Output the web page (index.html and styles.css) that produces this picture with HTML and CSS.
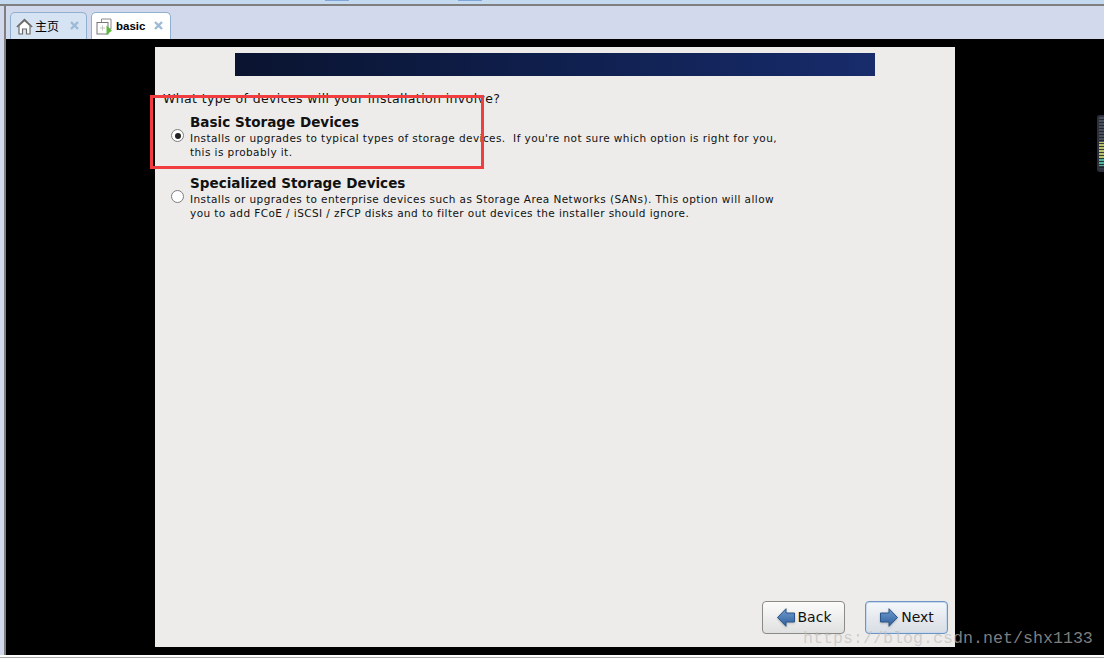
FILE: index.html
```html
<!DOCTYPE html>
<html lang="en">
<head>
<meta charset="utf-8">
<title>basic</title>
<link rel="stylesheet" href="styles.css">
</head>
<body>
<div class="top-strip"><span class="mark mark-a"></span><span class="mark mark-b"></span></div>
<div class="window">
  <div class="tabbar">
    <div class="tab tab-home">
      <svg class="ico" width="17" height="17" viewBox="0 0 17 17"><path d="M.8 9 8.500 1.500 16.200 9" fill="none" stroke="#6a6a6a" stroke-width="1.300"/><path d="M3 7.500V16h3.500v-5h4v5H14V7.500L8.500 2.500z" fill="#fff" stroke="#6a6a6a" stroke-width="1.200"/></svg>
      <span class="tab-label zh">主页</span>
      <svg class="tab-x" width="9" height="9" viewBox="0 0 9 9"><path d="M1 1l7 7M8 1 1 8" stroke="#9dbad6" stroke-width="2.400"/></svg>
    </div>
    <div class="tab tab-active">
      <svg class="ico" width="17" height="17" viewBox="0 0 17 17"><path d="M5.500 4V1h9.500v10h-2" fill="none" stroke="#8a8a8a"/><rect x="1" y="4.500" width="11" height="11.500" fill="#fff" stroke="#777"/><path d="M4 10h5M6.500 7.500v5" stroke="#c4c4c4"/><path d="M10.500 7.500 16 12.500l-5.500 4.500z" fill="#5cb83c"/></svg>
      <span class="tab-label bold">basic</span>
      <svg class="tab-x" width="9" height="9" viewBox="0 0 9 9"><path d="M1 1l7 7M8 1 1 8" stroke="#9dbad6" stroke-width="2.400"/></svg>
    </div>
  </div>
  <div class="screen">
    <div class="installer">
      <div class="banner"></div>
      <p class="question">What type of devices will your installation involve?</p>
      <div class="option option-first">
        <span class="radio radio-on"></span>
        <div class="option-text">
          <div class="option-title">Basic Storage Devices</div>
          <div class="option-desc">Installs or upgrades to typical types of storage devices.&nbsp; If you're not sure which option is right for you,<br>this is probably it.</div>
        </div>
      </div>
      <div class="option option-second">
        <span class="radio"></span>
        <div class="option-text">
          <div class="option-title">Specialized Storage Devices</div>
          <div class="option-desc">Installs or upgrades to enterprise devices such as Storage Area Networks (SANs). This option will allow<br>you to add FCoE / iSCSI / zFCP disks and to filter out devices the installer should ignore.</div>
        </div>
      </div>
      <div class="actions">
        <button class="btn"><svg class="arrow" width="18" height="19" viewBox="0 0 18 19"><defs><linearGradient id="ag" x1="0" y1="0" x2="0" y2="1"><stop offset="0" stop-color="#6f9ccf"/><stop offset="1" stop-color="#2f5f9c"/></linearGradient></defs><path d="M.5 9.500 9 .7V5h8.500v9H9v4.300z" fill="url(#ag)" stroke="#2b5488"/></svg>Back</button>
        <button class="btn btn-focus"><svg class="arrow" width="18" height="19" viewBox="0 0 18 19"><path d="M17.500 9.500 9 .7V5H.5v9H9v4.300z" fill="url(#ag)" stroke="#2b5488"/></svg>Next</button>
      </div>
    </div>
    <div class="handle"></div>
  </div>
</div>
<div class="bottom-strip"></div>
<div class="highlight"></div>
<div class="watermark">https://blog.csdn.net/shx1133</div>
</body>
</html>
```
FILE: styles.css
```css
* { box-sizing: border-box; }
html, body { margin: 0; height: 658px; overflow: hidden; }
body { width: 1104px; background: #fff; position: relative; font-family: "DejaVu Sans", sans-serif; }
.top-strip { height: 4px; background: #c5d9ef; position: relative; }
.mark { position: absolute; top: 0; width: 24px; height: 1px; background: #7ea6d8; }
.mark-a { left: 325px; }
.mark-b { left: 458px; }
.window { height: 651px; background: #d3d9ec; border-top: 2px solid #7f7f7f; padding-left: 4px; display: flex; flex-direction: column; }
.bottom-strip { height: 3px; border-bottom: 1px solid #a8a8a8; }
.tabbar { height: 33px; flex: none; border-left: 2px solid #7f7f7f; display: flex; align-items: flex-end; gap: 4px; padding-left: 4px; }
.tab { height: 27px; border: 1px solid #8fb0cf; border-bottom: 0; border-radius: 5px 5px 0 0; display: flex; align-items: center; position: relative; }
.tab-home { width: 77px; background: #d6e3f3; padding-left: 5px; }
.tab-active { width: 80px; background: #fff; padding-left: 4px; }
.ico { flex: none; }
.tab-label { font-size: 12px; margin-left: 3px; color: #000; }
.zh { font-family: "Noto Sans CJK SC", sans-serif; margin-left: 2px; margin-top: -1px; }
.bold { font-family: "Liberation Sans", sans-serif; font-weight: 700; font-size: 11.500px; margin-left: 3px; }
.tab-x { position: absolute; right: 7px; top: 8px; }
.screen { flex: 1; background: #000; border-left: 2px solid #7f7f7f; padding: 8px 0 8px 149px; position: relative; }
.installer { width: 800px; height: 600px; background: #edecea; position: relative; padding: 6px 0 0 8px; color: #000; }
.banner { width: 640px; height: 23px; margin-left: 72px; background: linear-gradient(90deg, #0a1430 0%, #0f1f4d 50%, #182b6b 100%); }
.question { margin: 14px 0 0; font-size: 12.500px; letter-spacing: .38px; line-height: 16px; color: #111; padding-top: 1px; height: 17px; }
.option { display: flex; align-items: center; margin-left: 8px; }
.option-first { margin-top: 7px; }
.option-second { margin-top: 16px; }
.radio { width: 13px; height: 13px; margin: 0 6px 2px 0; border-radius: 50%; border: 1px solid #7d7d7d; background: #fff; flex: none; position: relative; }
.radio-on::after { content: ""; position: absolute; left: 2.500px; top: 2.500px; width: 6px; height: 6px; border-radius: 50%; background: #222; }
.option-title { font-size: 13.550px; font-weight: 700; line-height: 16px; color: #111; margin-bottom: 1px; }
.option-desc { font-size: 10.500px; letter-spacing: .42px; line-height: 14px; color: #111; white-space: nowrap; }
.actions { position: absolute; right: 7px; bottom: 13px; display: flex; gap: 20px; }
.btn { width: 83px; height: 33px; border: 1px solid #8c8a86; border-radius: 4px; background: linear-gradient(#fcfcfb, #dfe0e0); display: flex; align-items: center; justify-content: center; gap: 3px; font: 14px "DejaVu Sans", sans-serif; color: #111; padding: 0 0 1px 1px; }
.arrow { flex: none; filter: drop-shadow(0 1px 1px rgba(0,0,0,.2)); }
.btn-focus { border-color: #6d94c4; background: linear-gradient(#f4f7fb, #d8dde4); box-shadow: inset 0 0 0 1px #c9d9ec; }
.handle { position: absolute; right: 0; top: 76px; width: 7px; height: 57px; border-radius: 3px 0 0 3px; border: 2px solid #2c303c; border-right: 0; background: repeating-linear-gradient(transparent 0 2px, rgba(30,33,42,.85) 2px 3px), linear-gradient(#4a4f5c 0 48%, #b7c26a 48% 78%, #4fb39a 78% 92%, #333845 92%); }
.highlight { position: absolute; left: 150px; top: 95px; width: 334px; height: 74px; border: 3px solid #f23d40; }
.watermark { position: absolute; left: 803px; top: 629px; font: 16.670px "Liberation Mono", monospace; color: rgba(190,190,190,.68); white-space: nowrap; }
```
